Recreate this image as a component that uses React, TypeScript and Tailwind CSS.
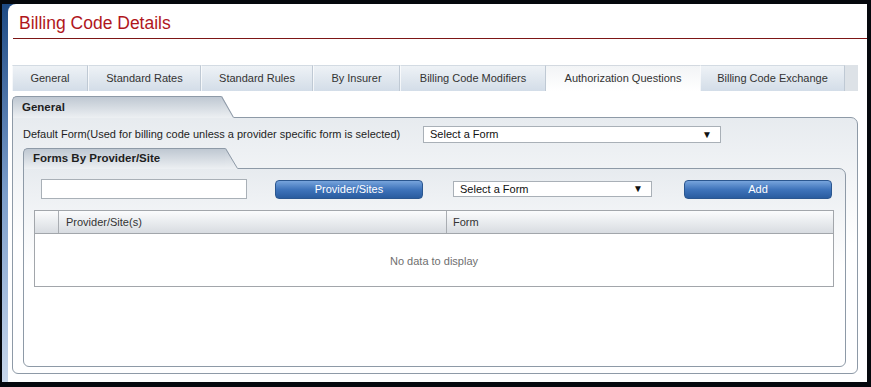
import React from "react";

const tabs = [
  { label: "General", w: "w-[76px]" },
  { label: "Standard Rates", w: "w-[113px]" },
  { label: "Standard Rules", w: "w-[112px]" },
  { label: "By Insurer", w: "w-[87px]" },
  { label: "Billing Code Modifiers", w: "w-[146px]" },
  { label: "Authorization Questions", w: "w-[154px]", active: true },
  { label: "Billing Code Exchange", w: "w-[145px]" },
];

function SectionTab({ label, w, h }: { label: string; w: string; h: string }) {
  // tab header with slanted right edge, sits over the body's top border
  return (
    <div className={`relative z-10 -mb-px flex ${h}`}>
      <div
        className={`${w} flex items-center rounded-tl-[5px] border-l border-t border-[#8e9aa7] bg-gradient-to-b from-[#bfc8d2] to-[#edf0f3] pl-[9px] text-[11.5px] font-bold text-[#1e1e1e]`}
      >
        {label}
      </div>
      <svg width="13" height="100%" viewBox="0 0 13 21" preserveAspectRatio="none" className="block">
        <defs>
          <linearGradient id={`g-${label.length}`} x1="0" y1="0" x2="0" y2="1">
            <stop offset="0" stopColor="#bfc8d2" />
            <stop offset="1" stopColor="#edf0f3" />
          </linearGradient>
        </defs>
        <polygon points="0,0 1,0 13,21 0,21" fill={`url(#g-${label.length})`} />
        <line x1="0.5" y1="0.5" x2="12.5" y2="20.5" stroke="#8e9aa7" strokeWidth="1" />
      </svg>
    </div>
  );
}

function SelectBox({ w, h }: { w: string; h: string }) {
  return (
    <div
      className={`${w} ${h} flex items-center justify-between border border-[#a9b0b7] bg-white pl-[6px] pr-[8px] text-[11px] text-[#111]`}
    >
      <span>Select a Form</span>
      <span className="text-[10px] leading-none">▼</span>
    </div>
  );
}

function BlueButton({ label }: { label: string }) {
  return (
    <button className="flex h-[19px] w-[148px] items-center justify-center rounded-[4px] border border-[#2b5790] bg-gradient-to-b from-[#77a4dc] via-[#3f74bb] to-[#2a5c9f] text-[11px] text-white">
      {label}
    </button>
  );
}

export default function App() {
  return (
    <div
      className="h-[387px] w-[871px] overflow-hidden bg-[#05080d] pb-[5px] pl-[2px] pr-[4px] pt-[4px] text-[#333]"
      style={{ fontFamily: '"Liberation Sans", Arial, sans-serif' }}
    >
      <div className="h-full bg-gradient-to-b from-[#1d4a84] via-[#7c9ecb] to-[#c8d7eb] pl-[6px]">
        <div className="flex h-full flex-col rounded-tl-[8px] bg-white">
          {/* title */}
          <div className="ml-[5px] border-b border-[#7d1616] pb-[4px] pl-[6px] pt-[9px] text-[17.5px] leading-[21px] text-[#b0161c]">
            Billing Code Details
          </div>

          {/* tab strip */}
          <div className="ml-[4px] mr-[9px] mt-[26px] flex h-[26px] bg-[#dde2e7]">
            {tabs.map((t) =>
              t.active ? (
                <div
                  key={t.label}
                  className={`${t.w} flex items-center justify-center border-t border-[#d3d9e0] bg-gradient-to-b from-[#f2f4f6] to-white text-[11px] text-[#333]`}
                >
                  {t.label}
                </div>
              ) : (
                <div
                  key={t.label}
                  className={`${t.w} flex items-center justify-center border-l border-r border-t border-l-white/70 border-r-[#bfc9d4] border-t-[#d3dbe3] bg-gradient-to-b from-[#eef2f6] to-[#d3dde8] text-[11px] text-[#333]`}
                >
                  {t.label}
                </div>
              ),
            )}
          </div>

          {/* General section */}
          <div className="mb-[8px] ml-[4px] mr-[9px] mt-[5px] flex flex-1 flex-col">
            <SectionTab label="General" w="w-[209px]" h="h-[22px]" />
            <div className="flex flex-1 flex-col rounded-b-[6px] rounded-tr-[7px] border border-[#8e9aa7] bg-gradient-to-b from-[#e7ebef] via-white to-white pb-[6px] pt-[8px]">
              <div className="flex h-[17px] items-center pl-[10px]">
                <span className="w-[400px] text-[11px] text-[#1e1e1e]">
                  Default Form(Used for billing code unless a provider specific form is selected)
                </span>
                <SelectBox w="w-[298px]" h="h-[17px]" />
              </div>

              {/* Forms By Provider/Site */}
              <div className="ml-[10px] mr-[11px] mt-[5px] flex flex-1 flex-col">
                <SectionTab label="Forms By Provider/Site" w="w-[202px]" h="h-[21px]" />
                <div className="flex flex-1 flex-col rounded-b-[6px] rounded-tr-[7px] border border-[#8e9aa7] bg-gradient-to-b from-[#e7ebef] via-white to-white pt-[10px]">
                  <div className="flex h-[20px] items-center pl-[17px]">
                    <div className="h-[20px] w-[206px] border border-[#a9b0b7] bg-white" />
                    <div className="ml-[28px]">
                      <BlueButton label="Provider/Sites" />
                    </div>
                    <div className="ml-[30px]">
                      <SelectBox w="w-[199px]" h="h-[16px]" />
                    </div>
                    <div className="ml-[32px]">
                      <BlueButton label="Add" />
                    </div>
                  </div>

                  {/* grid */}
                  <div className="ml-[10px] mt-[11px] w-[800px] border border-[#a2a6ab] bg-white">
                    <div className="flex h-[23px] border-b border-[#a2a6ab] bg-gradient-to-b from-[#fbfcfd] to-[#d8dce1] text-[11px] text-[#333]">
                      <div className="w-[24px] border-r border-[#a9adb2]" />
                      <div className="flex w-[388px] items-center border-r border-[#a9adb2] pl-[7px]">
                        Provider/Site(s)
                      </div>
                      <div className="flex flex-1 items-center pl-[6px]">Form</div>
                    </div>
                    <div className="flex h-[52px] items-center justify-center pt-[3px] text-[11px] text-[#6f6f6f]">
                      No data to display
                    </div>
                  </div>
                </div>
              </div>
            </div>
          </div>
        </div>
      </div>
    </div>
  );
}
